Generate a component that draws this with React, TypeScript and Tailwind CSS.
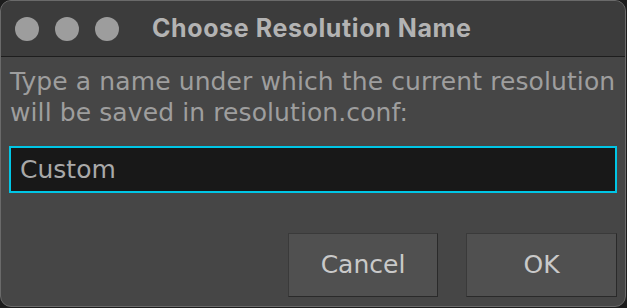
export default function App() {
  return (
    <div className="w-[627px] h-[308px] bg-[#1c1c1c] overflow-hidden">
      <div className="w-[626px] h-[307px] flex flex-col rounded-[11px] border border-[#6a6a6a] bg-[#464646] overflow-hidden">
        <div className="h-[56px] shrink-0 flex items-center bg-[#3c3c3c] border-b border-[#1e1e1e]">
          <div className="flex gap-[16px] pl-[14px]">
            <span className="w-[24px] h-[24px] rounded-full bg-[#9d9d9d]" />
            <span className="w-[24px] h-[24px] rounded-full bg-[#9d9d9d]" />
            <span className="w-[24px] h-[24px] rounded-full bg-[#9d9d9d]" />
          </div>
          <span className="ml-[33px] text-[25px] tracking-[0.6px] font-bold text-[#b3b3b3] font-['Inter',sans-serif]">
            Choose Resolution Name
          </span>
        </div>
        <div className="flex-1 flex flex-col px-[8px] pt-[9px] font-['DejaVu_Sans',sans-serif]">
          <p className="text-[25px] tracking-[0.1px] leading-[31px] text-[#9e9e9e] pl-[1px]">
            Type a name under which the current resolution
            <br />
            will be saved in resolution.conf:
          </p>
          <div className="mt-[18px] h-[47px] w-[608px] border-2 border-[#00c6e6] bg-[#181818] flex items-center px-[9px]">
            <span className="text-[25px] text-[#a9a9a9]">Custom</span>
          </div>
          <div className="flex justify-end gap-[28px] mt-[40px]">
            <button className="w-[150px] h-[64px] bg-[#505050] border border-[#2a2a2a] border-t-[#3a3a3a] border-l-[#3a3a3a] text-[25px] text-[#c9c9c9]">
              Cancel
            </button>
            <button className="w-[151px] h-[64px] bg-[#505050] border border-[#2a2a2a] border-t-[#3a3a3a] border-l-[#3a3a3a] text-[25px] text-[#c9c9c9]">
              OK
            </button>
          </div>
        </div>
      </div>
    </div>
  );
}
